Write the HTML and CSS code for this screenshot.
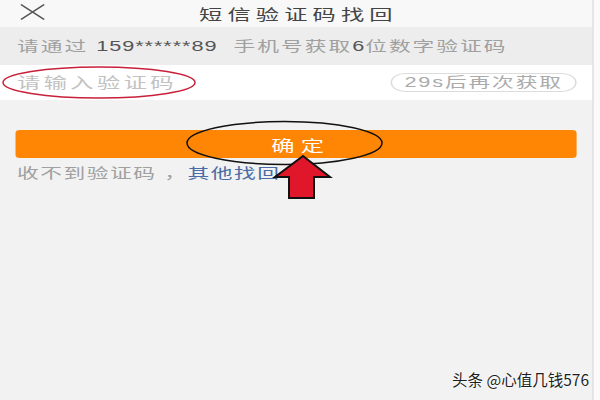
FILE: index.html
```html
<!DOCTYPE html>
<html lang="zh-CN">
<head>
    <meta charset="UTF-8">
    <meta name="viewport" content="width=device-width, initial-scale=1.0">
    <title>短信验证码找回</title>
    <link rel="stylesheet" href="styles.css">
</head>
<body>
    <div class="screen">
        <div class="topbar">
            <svg class="close" width="16" height="16" viewBox="0 0 16 16">
                <path d="M0.5 0.5 L15.5 15.5 M15.5 0.5 L0.5 15.5" stroke="#555" stroke-width="1.1" fill="none"/>
            </svg>
            <h1 class="title">短信验证码找回</h1>
        </div>
        <div class="info">请通过 <span class="num">159******89</span>&nbsp; 手机号获取<span class="num">6</span>位数字验证码</div>
        <div class="code-row">
            <input type="text" class="code-input" placeholder="请输入验证码">
            <span class="resend">29s后再次获取</span>
        </div>
        <div class="actions">
            <button class="btn">确定</button>
            <p class="help">收不到验证码 ，<a href="#" class="link">其他找回</a></p>
        </div>
    </div>

    <!-- annotations drawn over the screenshot -->
    <svg class="marks" width="600" height="400" viewBox="0 0 600 400">
        <ellipse cx="99" cy="82.5" rx="96" ry="15.5" fill="none" stroke="#c8203a" stroke-width="1.5"/>
        <ellipse cx="284.5" cy="143" rx="97.5" ry="21.5" fill="none" stroke="#111" stroke-width="1.5"/>
        <polygon points="303,156 330,177 314,177 314,198 289,198 289,177 275,177" fill="#e0162b" stroke="#111" stroke-width="2" stroke-linejoin="miter"/>
    </svg>

    <div class="watermark">头条 @心值几钱576</div>
</body>
</html>
```

FILE: styles.css
```css
html, body {
    margin: 0;
    padding: 0;
}
body {
    width: 600px;
    height: 400px;
    overflow: hidden;
    position: relative;
    background: #fafafa;
    font-family: "Liberation Sans", "Noto Sans CJK SC", sans-serif;
}
.screen {
    width: 383px;
    height: 400px;
    background: #f2f2f2;
    border-right: 1px solid #e2e2e2;
    box-sizing: border-box;
    transform: scaleX(1.55);
    transform-origin: 0 0;
}
.topbar {
    height: 27px;
    background: #f8f8f8;
    display: flex;
    align-items: center;
    justify-content: center;
    position: relative;
}
.close {
    position: absolute;
    left: 13px;
    top: 4px;
}
.title {
    margin: 0;
    font-size: 15px;
    font-weight: normal;
    letter-spacing: 3.3px;
    color: #444;
    padding-left: 3px;
}
.info {
    height: 38px;
    line-height: 38px;
    background: #ededed;
    padding-left: 11px;
    font-size: 14px;
    letter-spacing: 1.3px;
    color: #a0a0a0;
}
.info .num {
    color: #555;
    letter-spacing: 0.6px;
}
.code-row {
    height: 35px;
    background: #fff;
    display: flex;
    align-items: center;
    justify-content: space-between;
    padding: 0 10px 0 11px;
}
.code-input {
    border: none;
    outline: none;
    background: transparent;
    width: 160px;
    padding: 0;
    font-family: inherit;
    font-size: 15px;
    letter-spacing: 2.2px;
    color: #333;
}
.code-input::placeholder {
    color: #c2c2c2;
}
.resend {
    width: 118px;
    height: 17px;
    line-height: 17px;
    text-align: center;
    border: 1px solid #dcdcdc;
    border-radius: 10px;
    font-size: 14px;
    letter-spacing: 1.2px;
    color: #ababab;
}
.actions {
    padding: 30px 10px 0 10px;
}
.btn {
    display: block;
    width: 100%;
    height: 28px;
    border: none;
    border-radius: 3px;
    background: #ff8505;
    color: #fff;
    font-family: inherit;
    font-size: 15px;
    letter-spacing: 4px;
    padding: 0 0 0 6px;
}
.help {
    margin: 6px 0 0 1px;
    font-size: 14px;
    line-height: 18px;
    letter-spacing: 1px;
    color: #a0a0a0;
}
.link {
    color: #4a6ca6;
    text-decoration: none;
}
.marks {
    position: absolute;
    left: 0;
    top: 0;
    pointer-events: none;
}
.watermark {
    position: absolute;
    right: 11px;
    bottom: 10px;
    font-family: "Noto Sans CJK SC", sans-serif;
    font-size: 15.5px;
    color: #1e1e1e;
    text-shadow: 0 0 2px #fff, 0 0 2px #fff;
}
```
